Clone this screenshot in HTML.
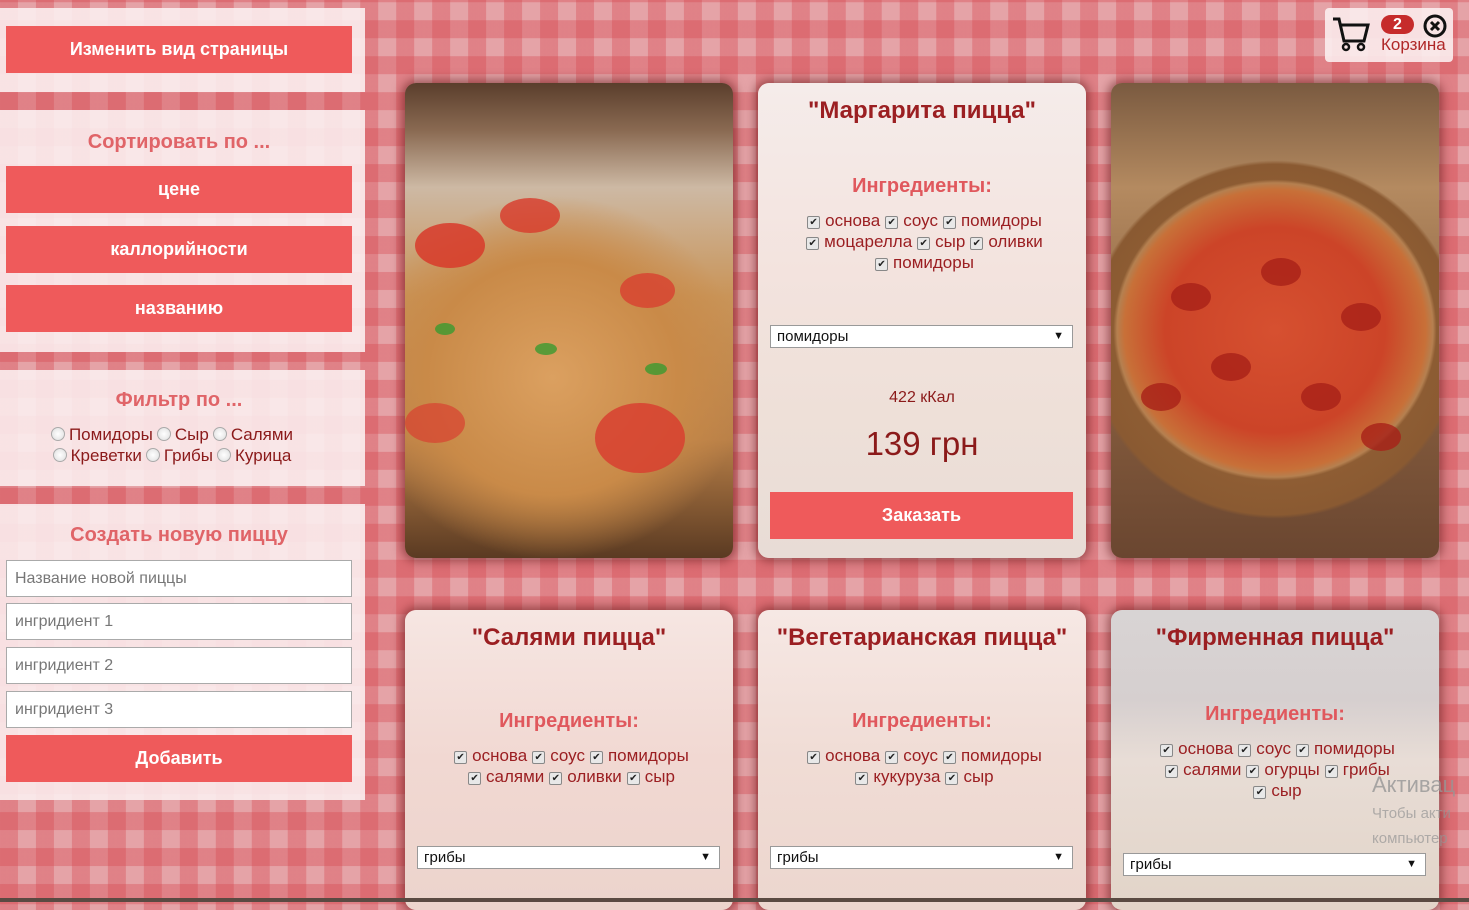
<!DOCTYPE html>
<html><head><meta charset="utf-8"><style>
*{box-sizing:border-box;margin:0;padding:0}
body{width:1469px;height:902px;overflow:hidden;position:relative;font-family:"Liberation Sans",Arial,sans-serif;
background-color:#e5a3a7;
background-image:
repeating-linear-gradient(90deg,rgba(214,70,78,.36) 0 18px,transparent 18px 36px),
repeating-linear-gradient(0deg,rgba(214,70,78,.36) 0 18px,transparent 18px 36px);}
.panel{position:absolute;left:0;width:365px;background:rgba(252,240,241,.88)}
.btn{position:absolute;left:6px;width:346px;height:47px;background:#ef5a5b;color:#fff;font-weight:bold;font-size:18px;text-align:center;line-height:47px}
.ph{position:absolute;left:0;width:358px;text-align:center;color:#e06468;font-weight:bold;font-size:20px}
.inp{position:absolute;left:6px;width:346px;height:37px;background:#fff;border:1px solid #aaa;color:#777;font-size:16px;line-height:35px;padding-left:8px}
.flt{position:absolute;left:0;width:340px;text-align:center;color:#8b1a1a;font-size:17px;line-height:21px}
.rd{display:inline-block;width:14px;height:14px;border-radius:50%;border:1px solid #aaa;background:radial-gradient(#fff,#ddd);vertical-align:-1px;margin:0 4px}
.card{position:absolute;width:328px;border-radius:11px;overflow:hidden;box-shadow:0 0 10px 3px rgba(90,20,20,.55)}
.t{position:absolute;left:0;width:100%;text-align:center;color:#9b1f22;font-weight:bold;font-size:24px}
.ing{position:absolute;left:0;width:100%;text-align:center;color:#e0585d;font-weight:bold;font-size:20px}
.cl{position:absolute;left:0;width:100%;text-align:center;color:#9b1f22;font-size:17px;line-height:21px}
.cb{display:inline-block;width:13px;height:13px;border:1px solid #888;background:#e8e8e8;font-size:10px;line-height:11px;color:#222;text-align:center;vertical-align:1px;margin:0 5px;border-radius:2px}
.sel{position:absolute;left:12px;width:303px;height:23px;background:#fff;border:1px solid #999;font-size:15px;line-height:21px;padding-left:6px;color:#111}
.sel:after{content:"▼";position:absolute;right:8px;font-size:11px}
.dot{position:absolute;border-radius:50%}
</style></head><body>

<div class="panel" style="top:8px;height:84px"></div>
<div class="btn" style="top:26px">Изменить вид страницы</div>

<div class="panel" style="top:110px;height:242px"></div>
<div class="ph" style="top:131px">Сортировать по ...</div>
<div class="btn" style="top:166px">цене</div>
<div class="btn" style="top:226px">каллорийности</div>
<div class="btn" style="top:285px">названию</div>

<div class="panel" style="top:370px;height:116px"></div>
<div class="ph" style="top:389px">Фильтр по ...</div>
<div class="flt" style="top:424px"><span class="rd"></span>Помидоры<span class="rd"></span>Сыр<span class="rd"></span>Салями<br><span class="rd"></span>Креветки<span class="rd"></span>Грибы<span class="rd"></span>Курица</div>

<div class="panel" style="top:504px;height:296px"></div>
<div class="ph" style="top:524px">Создать новую пиццу</div>
<div class="inp" style="top:560px">Название новой пиццы</div>
<div class="inp" style="top:603px">ингридиент 1</div>
<div class="inp" style="top:647px">ингридиент 2</div>
<div class="inp" style="top:691px">ингридиент 3</div>
<div class="btn" style="top:735px">Добавить</div>

<!-- cart -->
<div style="position:absolute;left:1325px;top:8px;width:128px;height:54px;background:rgba(252,240,241,.88);border-radius:4px"></div>
<svg style="position:absolute;left:1331px;top:14px" width="40" height="40" viewBox="0 0 40 40"><path d="M2 5h6l5 22h20l4-16H10" fill="none" stroke="#111" stroke-width="3"/><circle cx="15" cy="33" r="3" fill="none" stroke="#111" stroke-width="2.5"/><circle cx="30" cy="33" r="3" fill="none" stroke="#111" stroke-width="2.5"/></svg>
<div style="position:absolute;left:1381px;top:15px;width:33px;height:19px;border-radius:10px;background:#c62b2b;color:#fff;font-weight:bold;font-size:16px;text-align:center;line-height:19px">2</div>
<svg style="position:absolute;left:1423px;top:14px" width="24" height="24" viewBox="0 0 24 24"><circle cx="12" cy="12" r="10" fill="none" stroke="#111" stroke-width="3"/><path d="M8 8l8 8M16 8l-8 8" stroke="#111" stroke-width="3"/></svg>
<div style="position:absolute;left:1381px;top:35px;color:#b02828;font-size:17px">Корзина</div>

<!-- row 1 -->
<div class="card" style="left:405px;top:83px;height:475px;background:
radial-gradient(ellipse 70% 45% at 45% 62%,#dba060 0,#c98a48 55%,transparent 85%),
linear-gradient(180deg,#5a3e2c 0,#8a6a52 10%,#cdb9a4 22%,#c99458 45%,#b98048 75%,#5a3a22 100%)">
<div class="dot" style="left:10px;top:140px;width:70px;height:45px;background:#d83a2a;opacity:.85"></div>
<div class="dot" style="left:95px;top:115px;width:60px;height:35px;background:#d83a2a;opacity:.8"></div>
<div class="dot" style="left:215px;top:190px;width:55px;height:35px;background:#d84030;opacity:.8"></div>
<div class="dot" style="left:190px;top:320px;width:90px;height:70px;background:#d84030;opacity:.85"></div>
<div class="dot" style="left:0;top:320px;width:60px;height:40px;background:#d84030;opacity:.7"></div>
<div class="dot" style="left:30px;top:240px;width:20px;height:12px;background:#3a9a30;opacity:.8"></div>
<div class="dot" style="left:130px;top:260px;width:22px;height:12px;background:#3a9a30;opacity:.8"></div>
<div class="dot" style="left:240px;top:280px;width:22px;height:12px;background:#3a9a30;opacity:.8"></div>
</div>

<div class="card" style="left:758px;top:83px;height:475px;background:linear-gradient(180deg,#f5ecea,#f3e3de 40%,#eee0d8 70%,#e8dcd6)">
<div class="t" style="top:14px">"Маргарита пицца"</div>
<div class="ing" style="top:92px">Ингредиенты:</div>
<div class="cl" style="top:127px"><span class="cb">✔</span>основа<span class="cb">✔</span>соус<span class="cb">✔</span>помидоры<br><span class="cb">✔</span>моцарелла<span class="cb">✔</span>сыр<span class="cb">✔</span>оливки<br><span class="cb">✔</span>помидоры</div>
<div class="sel" style="top:242px">помидоры</div>
<div class="cl" style="top:304px;font-size:16px;color:#8b1a1a">422 кКал</div>
<div class="cl" style="top:342px;font-size:33px;line-height:38px;color:#8b1a1a">139 грн</div>
<div class="btn" style="top:409px;left:12px;width:303px;font-size:18px">Заказать</div>
</div>

<div class="card" style="left:1111px;top:83px;height:475px;background:
radial-gradient(ellipse 56% 36% at 50% 52%,#d65030 0,#cc4428 60%,#c87038 82%,#b58050 86%,transparent 88%),
radial-gradient(ellipse 62% 41% at 50% 54%,#a06a3a 0,#8a5a32 90%,transparent 92%),
linear-gradient(180deg,#7a5a40 0,#b48a60 22%,#8a6040 60%,#6a4630 100%)">
<div class="dot" style="left:60px;top:200px;width:40px;height:28px;background:#a82018;opacity:.8"></div>
<div class="dot" style="left:150px;top:175px;width:40px;height:28px;background:#a82018;opacity:.8"></div>
<div class="dot" style="left:230px;top:220px;width:40px;height:28px;background:#a82018;opacity:.8"></div>
<div class="dot" style="left:100px;top:270px;width:40px;height:28px;background:#a82018;opacity:.8"></div>
<div class="dot" style="left:190px;top:300px;width:40px;height:28px;background:#a82018;opacity:.8"></div>
<div class="dot" style="left:30px;top:300px;width:40px;height:28px;background:#a82018;opacity:.8"></div>
<div class="dot" style="left:250px;top:340px;width:40px;height:28px;background:#a82018;opacity:.8"></div>
</div>

<!-- row 2 -->
<div class="card" style="left:405px;top:610px;height:300px;background:linear-gradient(180deg,#f6e6e2,#f1d8d2 50%,#ecd4cc)">
<div class="t" style="top:14px">"Салями пицца"</div>
<div class="ing" style="top:100px">Ингредиенты:</div>
<div class="cl" style="top:135px"><span class="cb">✔</span>основа<span class="cb">✔</span>соус<span class="cb">✔</span>помидоры<br><span class="cb">✔</span>салями<span class="cb">✔</span>оливки<span class="cb">✔</span>сыр</div>
<div class="sel" style="top:236px">грибы</div>
</div>

<div class="card" style="left:758px;top:610px;height:300px;background:linear-gradient(180deg,#f6e8e4,#f0dcd5 50%,#ecd6ce)">
<div class="t" style="top:14px">"Вегетарианская пицца"</div>
<div class="ing" style="top:100px">Ингредиенты:</div>
<div class="cl" style="top:135px"><span class="cb">✔</span>основа<span class="cb">✔</span>соус<span class="cb">✔</span>помидоры<br><span class="cb">✔</span>кукуруза<span class="cb">✔</span>сыр</div>
<div class="sel" style="top:236px">грибы</div>
</div>

<div class="card" style="left:1111px;top:610px;height:300px;background:linear-gradient(180deg,#d8d4d4,#d6cfcf 30%,#e8ddd6 50%,#e2d4c8)">
<div class="t" style="top:14px">"Фирменная пицца"</div>
<div class="ing" style="top:93px">Ингредиенты:</div>
<div class="cl" style="top:128px"><span class="cb">✔</span>основа<span class="cb">✔</span>соус<span class="cb">✔</span>помидоры<br><span class="cb">✔</span>салями<span class="cb">✔</span>огурцы<span class="cb">✔</span>грибы<br><span class="cb">✔</span>сыр</div>
<div class="sel" style="top:243px">грибы</div>
</div>

<div style="position:absolute;left:1372px;top:772px;color:rgba(150,150,150,.8);font-size:22px">Активац</div>
<div style="position:absolute;left:1372px;top:805px;color:rgba(150,150,150,.7);font-size:15px">Чтобы акти</div>
<div style="position:absolute;left:1372px;top:830px;color:rgba(150,150,150,.7);font-size:15px">компьютер</div>

<div style="position:absolute;left:0;top:898px;width:1469px;height:4px;background:#5a4a42"></div>
</body></html>
